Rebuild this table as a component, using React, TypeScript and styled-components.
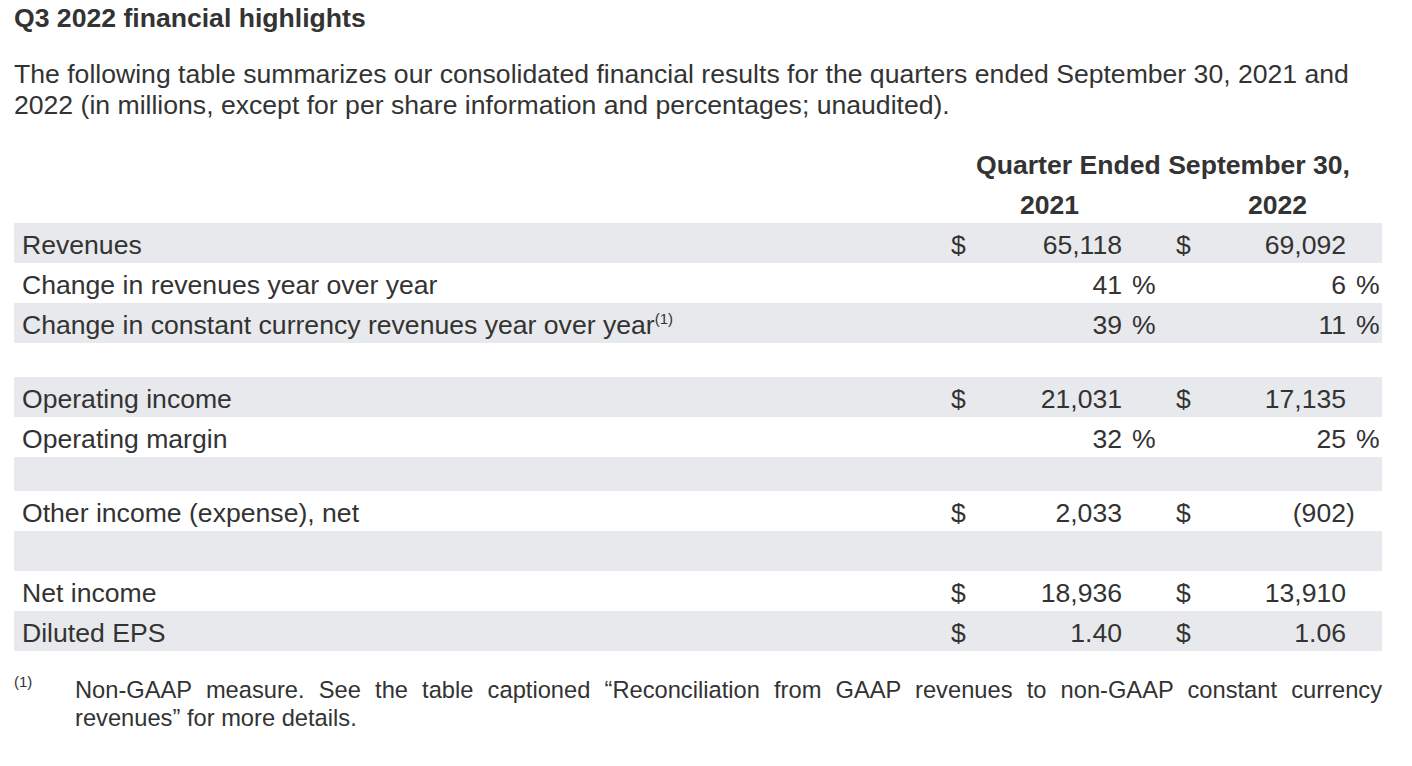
import React from "react";
import styled, { createGlobalStyle } from "styled-components";

const Global = createGlobalStyle`
  html, body { margin: 0; padding: 0; background: #ffffff; }
  body { font-family: "Liberation Sans", Arial, sans-serif; color: #333333; }
`;

const Page = styled.div`
  padding: 3px 30px 0 14px;
  width: 1368px;
`;

const Title = styled.h1`
  margin: 0;
  font-size: 26.6px;
  line-height: 30px;
  font-weight: 700;
`;

const Intro = styled.p`
  margin: 26px 0 0 0;
  font-size: 26.6px;
  line-height: 31px;
`;

const Table = styled.div`
  margin-top: 23px;
  display: flex;
  flex-direction: column;
`;

const cols = "934px 26px 148px 51px 26px 147px 36px";

const HeadRow = styled.div<{ $h: number; $pt: number }>`
  display: grid;
  grid-template-columns: ${cols};
  height: ${(p) => p.$h}px;
  font-size: 26.6px;
  font-weight: 700;
  line-height: 34px;
  padding-top: ${(p) => p.$pt}px;
  box-sizing: border-box;
`;

const HeadCell = styled.div<{ $from: number; $to: number; $pr?: number }>`
  grid-column: ${(p) => p.$from} / ${(p) => p.$to};
  text-align: center;
  padding-right: ${(p) => p.$pr ?? 0}px;
  white-space: nowrap;
`;

const Row = styled.div<{ $shade?: boolean; $h?: number }>`
  display: grid;
  grid-template-columns: ${cols};
  height: ${(p) => p.$h ?? 40}px;
  background: ${(p) => (p.$shade ? "#e8e9ec" : "transparent")};
  font-size: 26.6px;
  line-height: 34px;
  padding-top: 5px;
  box-sizing: border-box;
`;

const Label = styled.div`
  padding-left: 8px;
  white-space: nowrap;
`;

const Sup = styled.sup`
  font-size: 15px;
  line-height: 0;
  vertical-align: 10px;
`;

const Dollar = styled.div`
  text-align: left;
  padding-left: 3px;
`;

const Value = styled.div`
  text-align: right;
  white-space: nowrap;
`;

const Pct = styled.div<{ $hang?: boolean }>`
  text-align: left;
  padding-left: ${(p) => (p.$hang ? 0 : 10)}px;
`;

const Footnote = styled.div`
  display: flex;
  margin-top: 25px;
  font-size: 23.7px;
  line-height: 28px;
`;

const NoteMark = styled.div`
  width: 61px;
  flex: none;
  font-size: 15px;
  line-height: 12px;
`;

const NoteText = styled.p`
  margin: 0;
  flex: 1;
  text-align: justify;
`;

type Line = {
  label?: React.ReactNode;
  d1?: boolean;
  v1?: string;
  p1?: boolean;
  d2?: boolean;
  v2?: string;
  p2?: boolean;
  neg2?: boolean;
  shade?: boolean;
  h?: number;
};

const lines: Line[] = [
  { label: "Revenues", d1: true, v1: "65,118", d2: true, v2: "69,092", shade: true },
  { label: "Change in revenues year over year", v1: "41", p1: true, v2: "6", p2: true },
  {
    label: (
      <>
        Change in constant currency revenues year over year<Sup>(1)</Sup>
      </>
    ),
    v1: "39",
    p1: true,
    v2: "11",
    p2: true,
    shade: true,
  },
  { h: 34 },
  { label: "Operating income", d1: true, v1: "21,031", d2: true, v2: "17,135", shade: true },
  { label: "Operating margin", v1: "32", p1: true, v2: "25", p2: true },
  { h: 34, shade: true },
  { label: "Other income (expense), net", d1: true, v1: "2,033", d2: true, v2: "(902", neg2: true },
  { h: 40, shade: true },
  { label: "Net income", d1: true, v1: "18,936", d2: true, v2: "13,910" },
  { label: "Diluted EPS", d1: true, v1: "1.40", d2: true, v2: "1.06", shade: true },
];

export default function App() {
  return (
    <Page>
      <Global />
      <Title>Q3 2022 financial highlights</Title>
      <Intro>
        The following table summarizes our consolidated financial results for the quarters ended September 30, 2021 and
        2022 (in millions, except for per share information and percentages; unaudited).
      </Intro>
      <Table>
        <HeadRow $h={38} $pt={4}>
          <HeadCell $from={2} $to={8} $pr={4}>Quarter Ended September 30,</HeadCell>
        </HeadRow>
        <HeadRow $h={41} $pt={6}>
          <HeadCell $from={2} $to={5} $pr={22}>2021</HeadCell>
          <HeadCell $from={5} $to={8}>2022</HeadCell>
        </HeadRow>
        {lines.map((l, i) => (
          <Row key={i} $shade={l.shade} $h={l.h}>
            <Label>{l.label}</Label>
            <Dollar>{l.d1 ? "$" : ""}</Dollar>
            <Value>{l.v1 ?? ""}</Value>
            <Pct>{l.p1 ? "%" : ""}</Pct>
            <Dollar>{l.d2 ? "$" : ""}</Dollar>
            <Value>{l.v2 ?? ""}</Value>
            <Pct $hang={l.neg2}>{l.p2 ? "%" : l.neg2 ? ")" : ""}</Pct>
          </Row>
        ))}
      </Table>
      <Footnote>
        <NoteMark>(1)</NoteMark>
        <NoteText>
          Non-GAAP measure. See the table captioned “Reconciliation from GAAP revenues to non-GAAP constant currency
          revenues” for more details.
        </NoteText>
      </Footnote>
    </Page>
  );
}
